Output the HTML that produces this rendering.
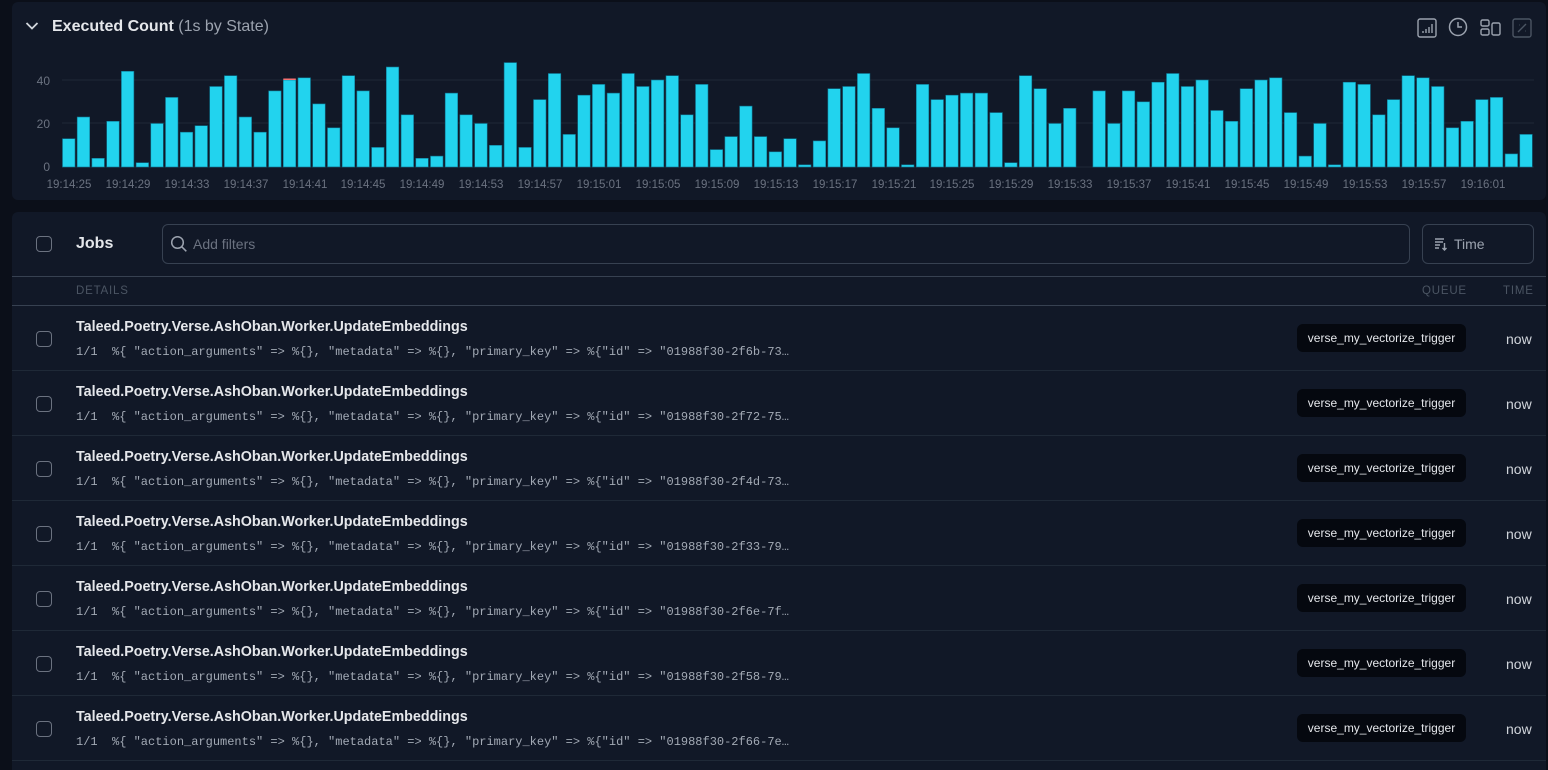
<!DOCTYPE html>
<html><head><meta charset="utf-8"><style>
*{box-sizing:border-box;margin:0;padding:0}
html,body{width:1548px;height:770px;overflow:hidden}
body{background:#0b0f19;font-family:"Liberation Sans",sans-serif;position:relative;color:#d1d5db}
.panel{position:absolute;left:12px;right:2px;background:#111827;border-radius:6px}
#chart{top:2px;height:198px}
#jobs{top:212px;height:558px;border-radius:6px 6px 0 0;overflow:hidden}
.title{position:absolute;left:40px;top:16px;font-size:16px;font-weight:bold;color:#e5e7eb}
.title span{font-weight:normal;color:#9ca3af}
.cb{position:absolute;width:16px;height:16px;border:1.5px solid #6b7280;border-radius:4px}
.row{position:absolute;left:0;right:0;height:65px;border-top:1px solid #1f2937}
.jt{position:absolute;left:64px;top:13px;font-size:14.3px;font-weight:bold;color:#e5e7eb}
.args{position:absolute;left:64px;top:39px;font-family:"Liberation Mono",monospace;font-size:12px;color:#a3aab5;white-space:pre}
.q{position:absolute;left:1285px;top:18px;width:169px;height:28px;background:#05080f;border-radius:6px;font-size:12px;color:#e5e7eb;text-align:center;line-height:28px}
.now{position:absolute;left:1494px;top:25px;font-size:14px;color:#d1d5db}
</style></head><body>
<div class="panel" id="chart">
<svg style="position:absolute;left:13px;top:19px" width="14" height="10" viewBox="0 0 14 10"><path d="M1.5 2l5.5 5.5 5.5-5.5" stroke="#d1d5db" stroke-width="1.8" fill="none"/></svg>
<div class="title">Executed Count <span>(1s by State)</span></div>
<svg style="position:absolute;left:1405px;top:16px" width="20" height="20" viewBox="0 0 20 20" fill="none" stroke="#9ca3af" stroke-width="1.4"><rect x="1" y="1" width="18" height="18" rx="2"/><path d="M6 15v-2M9 15v-4M12 15v-6M15 15v-9"/></svg>
<svg style="position:absolute;left:1436px;top:15px" width="20" height="20" viewBox="0 0 20 20" fill="none" stroke="#9ca3af" stroke-width="1.5"><circle cx="10" cy="10" r="8.5"/><path d="M10 5v5h4"/></svg>
<svg style="position:absolute;left:1468px;top:16px" width="22" height="20" viewBox="0 0 22 20" fill="none" stroke="#9ca3af" stroke-width="1.4"><rect x="1" y="2" width="8" height="6" rx="1.5"/><rect x="1" y="11" width="8" height="6" rx="1.5"/><rect x="12" y="5" width="8" height="12" rx="1.5"/></svg>
<svg style="position:absolute;left:1500px;top:16px" width="20" height="20" viewBox="0 0 20 20" fill="none" stroke="#4b5563" stroke-width="1.4"><rect x="1" y="1" width="18" height="18" rx="2"/><path d="M6 14l8-8M7 7h.5M13 13h.5"/></svg>
<svg id="bars" style="position:absolute;left:-12px;top:-2px" width="1548" height="200">
<line x1="62" x2="1534" y1="80" y2="80" stroke="#1f2937" stroke-width="1"/>
<line x1="62" x2="1534" y1="123" y2="123" stroke="#1f2937" stroke-width="1"/>
<line x1="62" x2="1534" y1="167" y2="167" stroke="#1f2937" stroke-width="1"/>
<g font-size="12" fill="#6b7280" font-family="Liberation Sans,sans-serif" text-anchor="end">
<text x="50" y="85">40</text><text x="50" y="128">20</text><text x="50" y="171">0</text></g>
<g id="lbl" font-size="11.5" fill="#6b7280" font-family="Liberation Sans,sans-serif" text-anchor="middle">
<text x="69" y="188">19:14:25</text><text x="128" y="188">19:14:29</text><text x="187" y="188">19:14:33</text><text x="246" y="188">19:14:37</text><text x="305" y="188">19:14:41</text><text x="363" y="188">19:14:45</text><text x="422" y="188">19:14:49</text><text x="481" y="188">19:14:53</text><text x="540" y="188">19:14:57</text><text x="599" y="188">19:15:01</text><text x="658" y="188">19:15:05</text><text x="717" y="188">19:15:09</text><text x="776" y="188">19:15:13</text><text x="835" y="188">19:15:17</text><text x="894" y="188">19:15:21</text><text x="952" y="188">19:15:25</text><text x="1011" y="188">19:15:29</text><text x="1070" y="188">19:15:33</text><text x="1129" y="188">19:15:37</text><text x="1188" y="188">19:15:41</text><text x="1247" y="188">19:15:45</text><text x="1306" y="188">19:15:49</text><text x="1365" y="188">19:15:53</text><text x="1424" y="188">19:15:57</text><text x="1483" y="188">19:16:01</text>
</g>
</svg>
</div>
<div class="panel" id="jobs">
<div class="cb" style="left:24px;top:24px"></div>
<div style="position:absolute;left:64px;top:23px;font-size:16px;font-weight:bold;color:#e5e7eb">Jobs</div>
<div style="position:absolute;left:150px;top:12px;width:1248px;height:40px;border:1px solid #374151;border-radius:6px"></div>
<svg style="position:absolute;left:158px;top:23px" width="18" height="18" viewBox="0 0 18 18" fill="none" stroke="#9ca3af" stroke-width="1.5"><circle cx="7.5" cy="7.5" r="5.8"/><path d="M11.8 11.8l4.5 4.5"/></svg>
<div style="position:absolute;left:181px;top:24px;font-size:14px;color:#6b7280">Add filters</div>
<div style="position:absolute;left:1410px;top:12px;width:112px;height:40px;border:1px solid #374151;border-radius:6px"></div>
<svg style="position:absolute;left:1422px;top:25px" width="14" height="14" viewBox="0 0 14 14" fill="none" stroke="#9ca3af" stroke-width="1.4"><path d="M1 2h9M1 5h8M1 8h5M1 11h4M10.5 6v7M8.5 11l2 2 2-2"/></svg>
<div style="position:absolute;left:1442px;top:24px;font-size:14px;color:#9ca3af">Time</div>
<div style="position:absolute;left:0;right:0;top:64px;border-top:1px solid #374151"></div>
<div style="position:absolute;left:64px;top:73px;font-size:11.5px;color:#4b5563;letter-spacing:0.8px">DETAILS</div>
<div style="position:absolute;left:1410px;top:73px;font-size:11.5px;color:#4b5563;letter-spacing:0.8px">QUEUE</div>
<div style="position:absolute;left:1491px;top:73px;font-size:11.5px;color:#4b5563;letter-spacing:0.8px">TIME</div>
<div class="row" style="top:93px;border-top-color:#374151"><div class="cb" style="left:24px;top:25px"></div><div class="jt">Taleed.Poetry.Verse.AshOban.Worker.UpdateEmbeddings</div><div class="args">1/1  %{ "action_arguments" =&gt; %{}, "metadata" =&gt; %{}, "primary_key" =&gt; %{"id" =&gt; "01988f30-2f6b-73…</div><div class="q">verse_my_vectorize_trigger</div><div class="now">now</div></div>
<div class="row" style="top:158px"><div class="cb" style="left:24px;top:25px"></div><div class="jt">Taleed.Poetry.Verse.AshOban.Worker.UpdateEmbeddings</div><div class="args">1/1  %{ "action_arguments" =&gt; %{}, "metadata" =&gt; %{}, "primary_key" =&gt; %{"id" =&gt; "01988f30-2f72-75…</div><div class="q">verse_my_vectorize_trigger</div><div class="now">now</div></div>
<div class="row" style="top:223px"><div class="cb" style="left:24px;top:25px"></div><div class="jt">Taleed.Poetry.Verse.AshOban.Worker.UpdateEmbeddings</div><div class="args">1/1  %{ "action_arguments" =&gt; %{}, "metadata" =&gt; %{}, "primary_key" =&gt; %{"id" =&gt; "01988f30-2f4d-73…</div><div class="q">verse_my_vectorize_trigger</div><div class="now">now</div></div>
<div class="row" style="top:288px"><div class="cb" style="left:24px;top:25px"></div><div class="jt">Taleed.Poetry.Verse.AshOban.Worker.UpdateEmbeddings</div><div class="args">1/1  %{ "action_arguments" =&gt; %{}, "metadata" =&gt; %{}, "primary_key" =&gt; %{"id" =&gt; "01988f30-2f33-79…</div><div class="q">verse_my_vectorize_trigger</div><div class="now">now</div></div>
<div class="row" style="top:353px"><div class="cb" style="left:24px;top:25px"></div><div class="jt">Taleed.Poetry.Verse.AshOban.Worker.UpdateEmbeddings</div><div class="args">1/1  %{ "action_arguments" =&gt; %{}, "metadata" =&gt; %{}, "primary_key" =&gt; %{"id" =&gt; "01988f30-2f6e-7f…</div><div class="q">verse_my_vectorize_trigger</div><div class="now">now</div></div>
<div class="row" style="top:418px"><div class="cb" style="left:24px;top:25px"></div><div class="jt">Taleed.Poetry.Verse.AshOban.Worker.UpdateEmbeddings</div><div class="args">1/1  %{ "action_arguments" =&gt; %{}, "metadata" =&gt; %{}, "primary_key" =&gt; %{"id" =&gt; "01988f30-2f58-79…</div><div class="q">verse_my_vectorize_trigger</div><div class="now">now</div></div>
<div class="row" style="top:483px;height:62px"><div class="cb" style="left:24px;top:25px"></div><div class="jt">Taleed.Poetry.Verse.AshOban.Worker.UpdateEmbeddings</div><div class="args">1/1  %{ "action_arguments" =&gt; %{}, "metadata" =&gt; %{}, "primary_key" =&gt; %{"id" =&gt; "01988f30-2f66-7e…</div><div class="q">verse_my_vectorize_trigger</div><div class="now">now</div></div>
<div style="position:absolute;left:0;right:0;top:548px;border-top:1px solid #1f2937"></div>
</div>
<script>
var v=[13,23,4,21,44,2,20,32,16,19,37,42,23,16,35,40,41,29,18,42,35,9,46,24,4,5,34,24,20,10,48,9,31,43,15,33,38,34,43,37,40,42,24,38,8,14,28,14,7,13,1,12,36,37,43,27,18,1,38,31,33,34,34,25,2,42,36,20,27,0,35,20,35,30,39,43,37,40,26,21,36,40,41,25,5,20,1,39,38,24,31,42,41,37,18,21,31,32,6,15];
var s=document.getElementById('bars'),st=14.72,h='';
for(var i=0;i<v.length;i++){if(!v[i])continue;var x=62.5+i*st,hh=v[i]*2.175,y=167-hh;
h+='<rect x="'+x.toFixed(1)+'" y="'+y.toFixed(1)+'" width="12.5" height="'+hh.toFixed(1)+'" fill="#22d3ee" stroke="#0e7490" stroke-width="0.6"/>';}
h+='<rect x="'+(62.5+15*st).toFixed(1)+'" y="'+(167-40*2.175-1.5).toFixed(1)+'" width="12.5" height="1.5" fill="#f87171"/>';
s.insertAdjacentHTML('beforeend',h);
</script>
</body></html>
